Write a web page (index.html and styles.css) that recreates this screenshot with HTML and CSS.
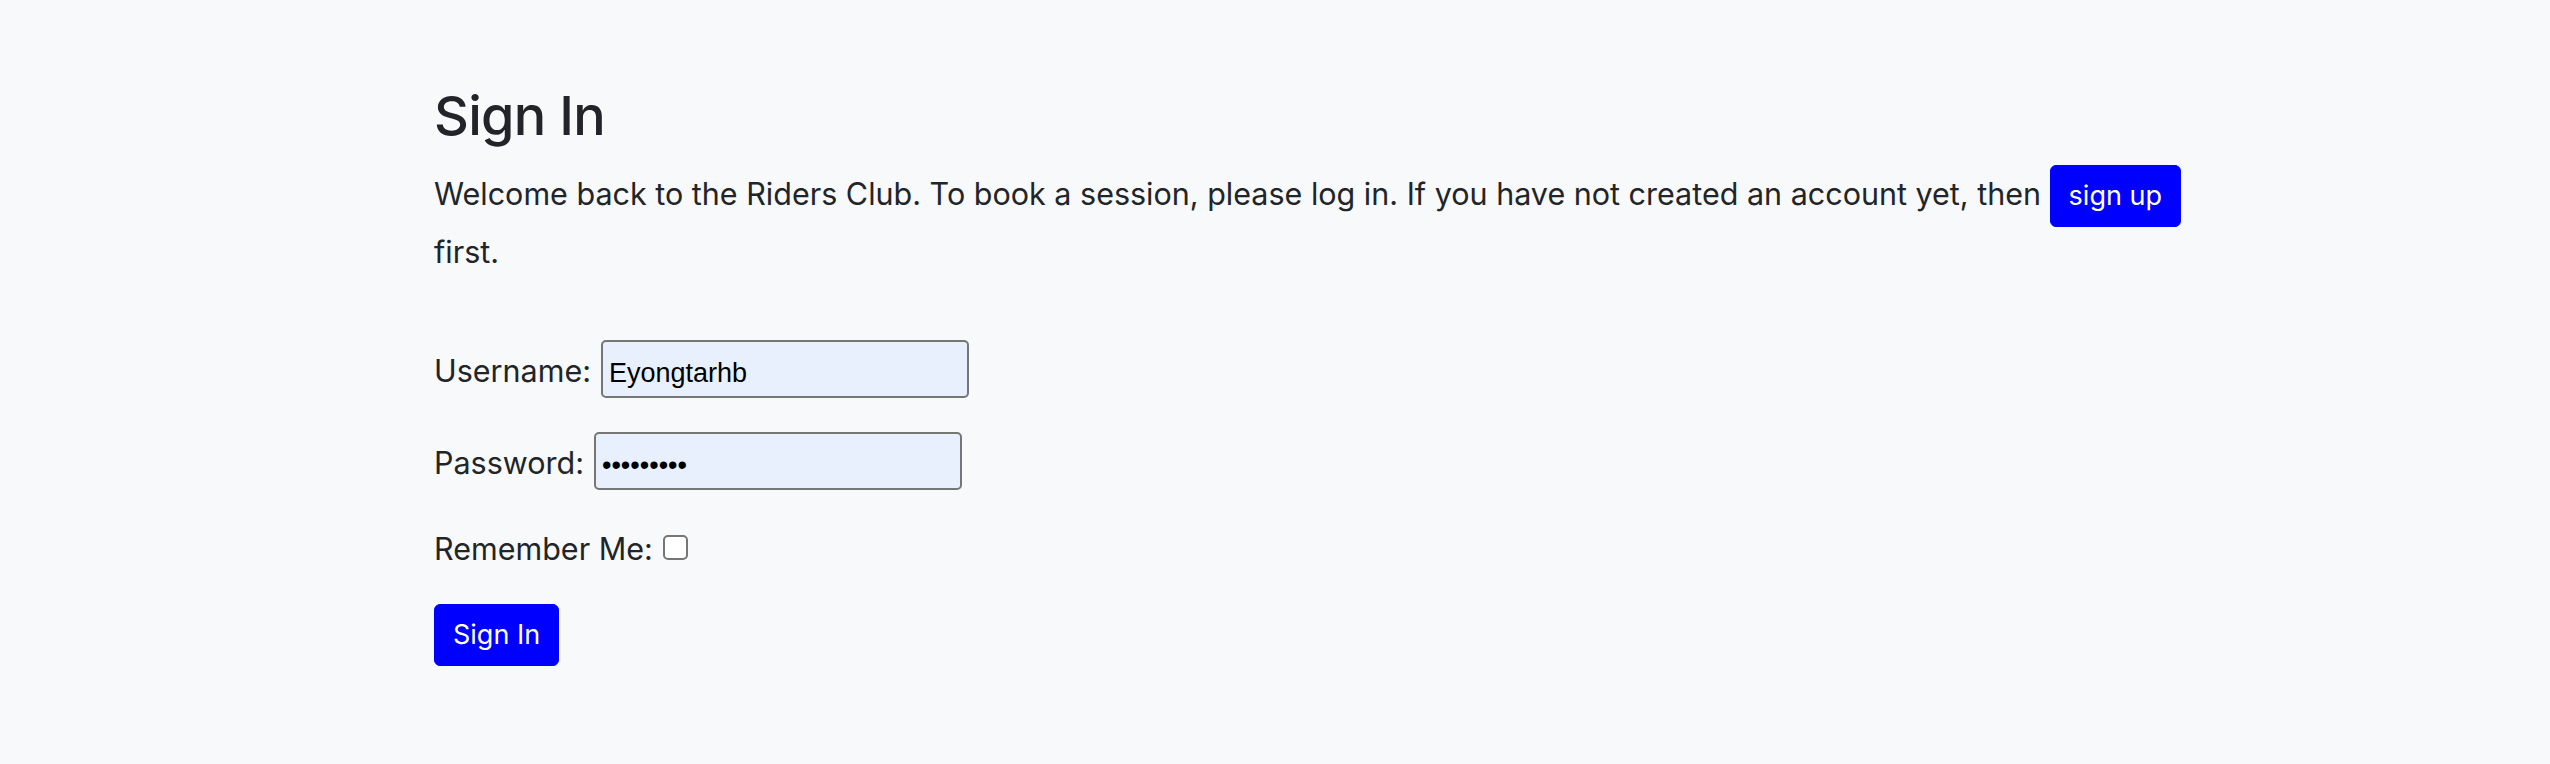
FILE: index.html
```html
<!DOCTYPE html>
<html lang="en">
<head>
<meta charset="utf-8">
<title>Sign In</title>
<link rel="stylesheet" href="styles.css">
</head>
<body>
<main class="page">
  <h1 class="title">Sign In</h1>
  <p class="intro">Welcome back to the Riders Club. To book a session, please log in. If you have not created an account yet, then <a class="btn btn-inline" href="#">sign up</a> first.</p>
  <form class="form">
    <div class="row row-user">
      <label class="label" for="u">Username:</label>
      <input class="field" id="u" type="text" value="Eyongtarhb">
    </div>
    <div class="row row-pass">
      <label class="label" for="p">Password:</label>
      <input class="field" id="p" type="password" value="123456789">
    </div>
    <div class="row row-remember">
      <label class="label" for="r">Remember Me:</label>
      <input class="check" id="r" type="checkbox">
    </div>
    <button class="btn btn-submit" type="button">Sign In</button>
  </form>
</main>
</body>
</html>
```

FILE: styles.css
```css
html, body {
  margin: 0;
  padding: 0;
}
body {
  background: #f8f9fa;
  color: #212529;
  font-family: Inter, "Noto Sans", sans-serif;
  font-size: 30.5px;
  line-height: 45px;
}
.page {
  width: 1765px;
  margin-left: 434px;
  padding-top: 83px;
}
.title {
  margin: 0 0 17px 0;
  font-size: 54px;
  font-weight: 500;
  line-height: 65px;
  letter-spacing: -0.7px;
}
.intro {
  margin: 0;
  line-height: 45px;
}
.btn {
  display: inline-block;
  background: #0000ff;
  color: #ffffff;
  border: 1px solid #0000ff;
  border-radius: 6px;
  font-family: Inter, "Noto Sans", sans-serif;
  font-size: 27px;
  line-height: 40px;
  padding: 10px 18px;
  text-decoration: none;
}
.btn-inline {
  margin-bottom: 2px;
}
.form {
  margin-top: 66px;
}
.row {
  display: flex;
  align-items: baseline;
  gap: 10px;
}
.row-pass {
  margin-top: 34px;
}
.row-remember {
  margin-top: 36px;
  gap: 10px;
}
.field {
  box-sizing: border-box;
  width: 368px;
  height: 58px;
  margin: 0;
  padding: 8px 6px 0 6px;
  border: 2px solid #767676;
  border-radius: 5px;
  background: #e8f0fe;
  color: #000000;
  font-family: "Liberation Sans", Arial, sans-serif;
  font-size: 27px;
}
.check {
  appearance: none;
  -webkit-appearance: none;
  box-sizing: border-box;
  width: 25px;
  height: 25px;
  margin: 0;
  border: 2px solid #767676;
  border-radius: 5px;
  background: #ffffff;
}
.btn-submit {
  margin-top: 33px;
  cursor: pointer;
}
```
